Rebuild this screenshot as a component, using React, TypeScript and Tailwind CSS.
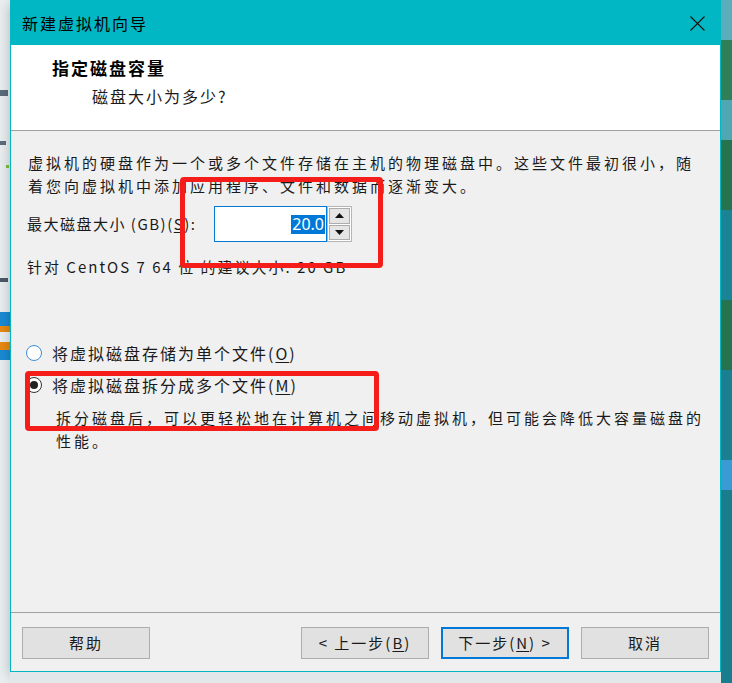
import React from "react";

// Windows 10 dialog colours
const FONT = { fontFamily: '"Noto Sans CJK SC", "Noto Sans", sans-serif' };

const Mn: React.FC<{ c: string }> = ({ c }) => <span className="underline underline-offset-2">{c}</span>;

const Radio: React.FC<{ checked?: boolean; label: React.ReactNode }> = ({ checked, label }) => (
    <div className="flex items-center h-[22px] pl-[15px]">
        <div
            className={`w-[16px] h-[16px] rounded-full bg-white border flex items-center justify-center ${checked ? "border-[#333333]" : "border-[#3c8fd9]"
                }`}
        >
            {checked && <div className="w-[8px] h-[8px] rounded-full bg-[#222222]" />}
        </div>
        <span className="ml-[10px] text-[16px] tracking-[2px] text-[#1a1a1a] leading-[22px]">{label}</span>
    </div>
);

const Btn: React.FC<{ children: React.ReactNode; primary?: boolean }> = ({ children, primary }) => (
    <button
        className={`w-[128px] h-[32px] bg-[#e1e1e1] text-[15px] tracking-[2px] text-[#1a1a1a] flex items-center justify-center ${primary ? "border-2 border-[#0078d7]" : "border border-[#adadad]"
            }`}
    >
        {children}
    </button>
);

const Arrow: React.FC<{ up?: boolean }> = ({ up }) => (
    <div className="flex-1 bg-[#e5e5e5] border border-[#adadad] flex items-center justify-center">
        <svg width="9" height="5" viewBox="0 0 9 5">
            <polygon points={up ? "0,5 9,5 4.5,0" : "0,0 9,0 4.5,5"} fill="#111" />
        </svg>
    </div>
);

export default function App() {
    return (
        <div className="relative w-[732px] h-[683px] flex overflow-hidden bg-[#e6ecef]" style={FONT}>
            {/* left desktop strip */}
            <div className="w-[10px] h-full flex flex-col bg-[#e9eef1]">
                <div className="h-[90px]" />
                <div className="h-[6px] w-[8px] bg-[#5b6c7c]" />
                <div className="h-[45px]" />
                <div className="h-[4px] w-[6px] bg-[#5b6c7c]" />
                <div className="h-[20px]" />
                <div className="h-[3px] w-[3px] ml-[6px] bg-[#7cc23a]" />
                <div className="h-[110px]" />
                <div className="h-[4px] w-[8px] bg-[#4d5a66]" />
                <div className="h-[30px]" />
                <div className="h-[14px] w-[10px] bg-[#1a8ad4]" />
                <div className="h-[6px] w-[10px] bg-[#e88a12]" />
                <div className="h-[10px]" />
                <div className="h-[8px] w-[10px] bg-[#e88a12]" />
                <div className="h-[10px] w-[10px] bg-[#1a8ad4]" />
            </div>

            {/* dialog column */}
            <div className="w-[711px] h-full flex flex-col">
                <div className="h-[672px] flex flex-col border border-[#00b7c3] bg-[#f0f0f0] shadow-[0_4px_12px_rgba(0,0,0,0.25)]">
                    {/* title bar */}
                    <div className="h-[44px] bg-[#00b7c3] flex items-center shrink-0">
                        <span className="pl-[11px] text-[16px] tracking-[2px] text-black">新建虚拟机向导</span>
                        <div className="ml-auto w-[46px] h-full flex items-center justify-center">
                            <svg width="15" height="15" viewBox="0 0 15 15">
                                <path d="M0.5 0.5 L14.5 14.5 M14.5 0.5 L0.5 14.5" stroke="#111" strokeWidth="1.1" />
                            </svg>
                        </div>
                    </div>

                    {/* header */}
                    <div className="h-[86px] bg-white border-b border-[#a0a0a0] shrink-0 pt-[11px]">
                        <div className="pl-[41px] text-[17px] font-bold tracking-[2px] leading-[24px] text-black">指定磁盘容量</div>
                        <div className="pl-[81px] mt-[4px] text-[16px] tracking-[2px] leading-[24px] text-[#1a1a1a]">磁盘大小为多少?</div>
                    </div>

                    {/* body */}
                    <div className="flex-1 flex flex-col">
                        <p className="pl-[17px] pr-[14px] pt-[20px] text-[15px] tracking-[3px] leading-[23px] text-[#1a1a1a]">
                            虚拟机的硬盘作为一个或多个文件存储在主机的物理磁盘中。这些文件最初很小，随着您向虚拟机中添加应用程序、文件和数据而逐渐变大。
                        </p>

                        <div className="flex items-center pl-[16px] mt-[9px]">
                            <span className="text-[15px] tracking-[1.5px] text-[#1a1a1a] w-[187px]">
                                最大磁盘大小 (GB)(<Mn c="S" />):
                            </span>
                            <div className="w-[113px] h-[36px] bg-white border border-[#0078d7] flex items-center justify-end pr-[1px]">
                                <span className="bg-[#0078d7] text-white text-[16px] leading-[19px] px-[1px]" style={{ fontFamily: '"Noto Sans", sans-serif' }}>
                                    20.0
                                </span>
                            </div>
                            <div className="w-[25px] h-[36px] bg-white border border-[#b5b5b5] p-[1px] flex flex-col gap-[1px]">
                                <Arrow up />
                                <Arrow />
                            </div>
                        </div>

                        <div className="pl-[16px] mt-[15px] text-[15px] tracking-[2px] leading-[20px] text-[#1a1a1a]">
                            针对 CentOS 7 64 位 的建议大小: 20 GB
                        </div>

                        <div className="mt-[65px]">
                            <Radio label={<>将虚拟磁盘存储为单个文件(<Mn c="O" />)</>} />
                        </div>
                        <div className="mt-[10px]">
                            <Radio checked label={<>将虚拟磁盘拆分成多个文件(<Mn c="M" />)</>} />
                        </div>
                        <p className="pl-[45px] pr-[10px] mt-[10px] text-[15px] tracking-[3px] leading-[23px] text-[#1a1a1a]">
                            拆分磁盘后，可以更轻松地在计算机之间移动虚拟机，但可能会降低大容量磁盘的性能。
                        </p>

                        {/* footer */}
                        <div className="mt-auto border-t border-[#a0a0a0] h-[59px] pt-[14px] px-[11px] flex gap-[12px]">
                            <Btn>帮助</Btn>
                            <div className="flex-1" />
                            <Btn>&lt; 上一步(<Mn c="B" />)</Btn>
                            <Btn primary>下一步(<Mn c="N" />) &gt;</Btn>
                            <Btn>取消</Btn>
                        </div>
                    </div>
                </div>
                <div className="flex-1 bg-[#e2e8ea]" />
            </div>

            {/* right desktop strip */}
            <div className="flex-1 h-full flex flex-col bg-[#1c8b9c]">
                <div className="h-[40px] bg-[#5aaebc]" />
                <div className="h-[60px] bg-[#2f7f58]" />
                <div className="h-[40px] bg-[#4ea7b3]" />
                <div className="h-[70px] bg-[#26734f]" />
                <div className="h-[90px] bg-[#1a8396]" />
                <div className="h-[70px] bg-[#26734f]" />
                <div className="h-[90px] bg-[#197f91]" />
                <div className="h-[30px] bg-[#3a9ad4]" />
                <div className="flex-1 bg-[#1a7d8e]" />
            </div>

            {/* red annotation boxes */}
            <div className="absolute left-[180px] top-[177px] w-[203px] h-[91px] border-[5px] border-[#f51d19] rounded-[4px]" />
            <div className="absolute left-[25px] top-[371px] w-[354px] h-[60px] border-[5px] border-[#f51d19] rounded-[4px]" />
        </div>
    );
}
